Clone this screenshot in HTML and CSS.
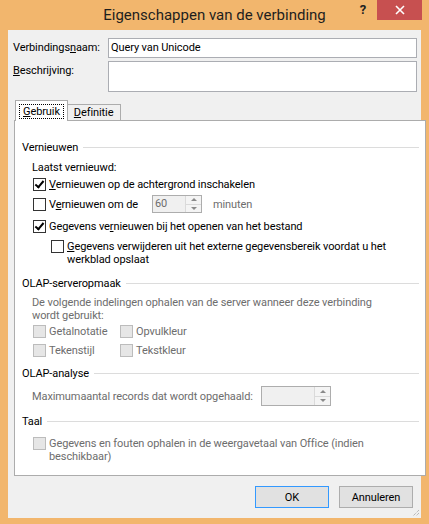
FILE: index.html
```html
<!DOCTYPE html>
<html lang="nl">
<head>
<meta charset="UTF-8" />
<meta name="viewport" content="width=device-width, initial-scale=1.0" />
<title>Eigenschappen van de verbinding</title>
<link rel="stylesheet" href="styles.css">
</head>
<body>

<div class="window">
  <!-- Titelbalk -->
  <div class="titlebar">
    <span></span>
    <span class="title">Eigenschappen van de verbinding</span>
    <span class="caption-buttons">
      <span class="help">?</span>
      <span class="close">
        <svg width="10" height="10" viewBox="0 0 10 10"><path d="M1 1 L9 9 M9 1 L1 9" stroke="#fff" stroke-width="1.6" fill="none"/></svg>
      </span>
    </span>
  </div>

  <div class="dialog">
    <!-- Naam en beschrijving -->
    <div class="field">
      <span class="field-label">Verbindings<u>n</u>aam:</span>
      <div class="textbox">Query van Unicode</div>
    </div>
    <div class="field">
      <span class="field-label"><u>B</u>eschrijving:</span>
      <div class="textbox area"></div>
    </div>

    <!-- Tabbladen -->
    <div class="tabs">
      <div class="tab active"><span class="focus"><u>G</u>ebruik</span></div>
      <div class="tab"><u>D</u>efinitie</div>
    </div>

    <div class="panel">
      <div class="section s-refresh"><span>Vernieuwen</span><i class="rule"></i></div>
      <div class="row plain r-last">Laatst vernieuwd:</div>

      <div class="row r-cb1">
        <span class="check on"></span>
        <span><u>V</u>ernieuwen op de achtergrond inschakelen</span>
      </div>
      <div class="row r-cb2">
        <span class="check"></span>
        <span class="every">V<u>e</u>rnieuwen om de</span>
        <span class="spin small">
          <span class="spin-value">60</span>
          <span class="spin-arrows"><b class="up"></b><b class="down"></b></span>
        </span>
        <span class="muted">minuten</span>
      </div>
      <div class="row r-cb3">
        <span class="check on"></span>
        <span>Gegevens ve<u>r</u>nieuwen bij het openen van het bestand</span>
      </div>
      <div class="row wrap r-cb4">
        <span class="check"></span>
        <span class="wrap-text"><u>G</u>egevens verwijderen uit het externe gegevensbereik voordat u het werkblad opslaat</span>
      </div>

      <div class="section s-olap"><span>OLAP-serveropmaak</span><i class="rule"></i></div>
      <div class="row wrap plain muted r-desc">De volgende indelingen ophalen van de server wanneer deze verbinding wordt gebruikt:</div>
      <div class="row r-fmt1">
        <span class="pair"><span class="check off"></span><span class="muted">Getalnotatie</span></span>
        <span class="pair"><span class="check off"></span><span class="muted">Opvulkleur</span></span>
      </div>
      <div class="row r-fmt2">
        <span class="pair"><span class="check off"></span><span class="muted">Tekenstijl</span></span>
        <span class="pair"><span class="check off"></span><span class="muted">Tekstkleur</span></span>
      </div>

      <div class="section s-analysis"><span>OLAP-analyse</span><i class="rule"></i></div>
      <div class="row plain r-max">
        <span class="muted max-label">Maximumaantal records dat wordt opgehaald:</span>
        <span class="spin wide">
          <span class="spin-value"></span>
          <span class="spin-arrows"><b class="up"></b><b class="down"></b></span>
        </span>
      </div>

      <div class="section s-lang"><span>Taal</span><i class="rule"></i></div>
      <div class="row wrap r-lang">
        <span class="check off"></span>
        <span class="wrap-text muted">Gegevens en fouten ophalen in de weergavetaal van Office (indien beschikbaar)</span>
      </div>
    </div>

    <!-- Knoppen -->
    <div class="buttons">
      <button class="btn default">OK</button>
      <button class="btn">Annuleren</button>
    </div>

    <svg class="grip" width="8" height="8" viewBox="0 0 8 8">
      <path d="M7 1 L1 7 M7 4 L4 7" stroke="#a0a0a0" stroke-width="1" stroke-dasharray="1 1" fill="none"/>
    </svg>
  </div>
</div>

</body>
</html>
```

FILE: styles.css
```css
/* Algemeen */
body {
  margin: 0;
  font-family: Roboto, 'Liberation Sans', sans-serif;
  font-size: 11px;
  letter-spacing: -0.1px;
  color: #000;
  background: #f2b66d;
}

.window {
  width: 429px;
  height: 524px;
  display: flex;
  flex-direction: column;
  background: #f2b66d;
}

/* Titelbalk */
.titlebar {
  height: 30px;
  display: grid;
  grid-template-columns: 1fr auto 1fr;
  align-items: start;
}
.title {
  font-size: 15px;
  letter-spacing: 0;
  color: #1e1e1e;
  line-height: 31px;
}
.caption-buttons {
  display: flex;
  justify-content: flex-end;
  padding-right: 7px;
}
.help {
  font-weight: bold;
  font-size: 13px;
  color: #222;
  line-height: 20px;
  margin-right: 11px;
}
.close {
  width: 45px;
  height: 20px;
  background: #c75050;
  display: flex;
  align-items: center;
  justify-content: center;
}

/* Dialoog */
.dialog {
  position: relative;
  flex: 1;
  margin: 0 8px 6px;
  background: #f0f0f0;
  display: flex;
  flex-direction: column;
  padding-top: 8px;
}

.field {
  display: flex;
  padding-left: 5px;
  margin-bottom: 3px;
}
.field-label {
  width: 95px;
  flex: none;
  line-height: 20px;
}
.textbox {
  width: 305px;
  height: 18px;
  border: 1px solid #abadb3;
  background: #fff;
  padding-left: 2px;
  line-height: 18px;
}
.textbox.area {
  height: 29px;
}

/* Tabbladen */
.tabs {
  display: flex;
  align-items: flex-end;
  margin: 5px 0 0 7px;
  position: relative;
  z-index: 1;
}
.tab {
  height: 15px;
  padding: 0 7px 0 6px;
  border: 1px solid #acacac;
  border-bottom: none;
  background: #f0f0f0;
  line-height: 16px;
}
.tab + .tab {
  border-left: none;
}
.tab.active {
  height: 20px;
  padding: 0 3px;
  background: #fff;
  margin-bottom: -1px;
  display: flex;
  align-items: center;
}
.focus {
  border: 1px dotted #000;
  padding: 0 3px;
  line-height: 13px;
}

.panel {
  height: 354px;
  margin-left: 6px;
  width: 397px;
  border: 1px solid #acacac;
  background: #fff;
  padding: 0 6px 0 7px;
  box-sizing: content-box;
}

/* Secties */
.section {
  display: flex;
  align-items: center;
  height: 16px;
}
.rule {
  flex: 1;
  height: 1px;
  background: #dcdcdc;
  margin-left: 5px;
}
.row {
  display: flex;
  align-items: center;
  height: 16px;
  padding-left: 11px;
}
.row.plain {
  padding-left: 10px;
}
.row.wrap {
  height: auto;
  align-items: flex-start;
  line-height: 13px;
}
.wrap-text {
  flex: 1;
  min-width: 0;
}
.muted {
  color: #6d6d6d;
}

.s-refresh { margin-top: 18px; }
.r-last { margin-top: 4px; }
.r-cb1 { margin-top: 1px; }
.r-cb2 { margin-top: 2px; height: 20px; }
.r-cb3 { margin-top: 4px; }
.r-cb4 { margin-top: 5.5px; padding-left: 29px; padding-right: 8px; }
.s-olap { margin-top: 9.5px; }
.r-desc { margin-top: 4.5px; padding-right: 34px; }
.r-fmt1 { margin-top: 1.5px; }
.r-fmt2 { margin-top: 3px; }
.s-analysis { margin-top: 7px; }
.r-max { margin-top: 5px; height: 20px; }
.s-lang { margin-top: 7px; }
.r-lang { margin-top: 7.5px; padding-right: 20px; }

/* Selectievakjes */
.check {
  flex: none;
  width: 11px;
  height: 11px;
  border: 1px solid #333;
  background: #fff;
  margin-right: 3px;
  position: relative;
}
.check.on::after {
  content: '';
  position: absolute;
  left: 3px;
  top: 0;
  width: 3px;
  height: 7px;
  border: solid #000;
  border-width: 0 2px 2px 0;
  transform: rotate(40deg);
}
.check.off {
  background: #e6e6e6;
  border-color: #bcbcbc;
}
.pair {
  display: flex;
  align-items: center;
  width: 87px;
}

/* Spinvakken */
.every {
  width: 103px;
  flex: none;
}
.spin {
  display: flex;
  flex: none;
  height: 16px;
  border: 1px solid #adadad;
  background: #f0f0f0;
  margin-right: 11px;
}
.spin.small { width: 48px; }
.spin.wide { width: 68px; height: 18px; }
.spin-value {
  flex: 1;
  color: #6d6d6d;
  padding-left: 2px;
  line-height: 16px;
}
.spin-arrows {
  width: 15px;
  display: flex;
  flex-direction: column;
  border-left: 1px solid #dadada;
  background: #f4f4f4;
}
.spin-arrows b {
  flex: 1;
  display: flex;
  align-items: center;
  justify-content: center;
}
.spin-arrows b + b {
  border-top: 1px solid #dadada;
}
.up::after,
.down::after {
  content: '';
  border-left: 3px solid transparent;
  border-right: 3px solid transparent;
}
.up::after { border-bottom: 3px solid #8a8a8a; }
.down::after { border-top: 3px solid #8a8a8a; }
.max-label {
  width: 229px;
  flex: none;
  white-space: nowrap;
}

/* Knoppen */
.buttons {
  display: flex;
  justify-content: flex-end;
  gap: 10px;
  margin-top: 10px;
  padding-right: 8px;
}
.btn {
  width: 74px;
  height: 22px;
  border: 1px solid #adadad;
  background: #e1e1e1;
  font-family: inherit;
  font-size: inherit;
  letter-spacing: inherit;
  color: #000;
  padding: 0;
}
.btn.default {
  border-color: #3399ff;
}

.grip {
  position: absolute;
  right: 1px;
  bottom: 1px;
}
```
